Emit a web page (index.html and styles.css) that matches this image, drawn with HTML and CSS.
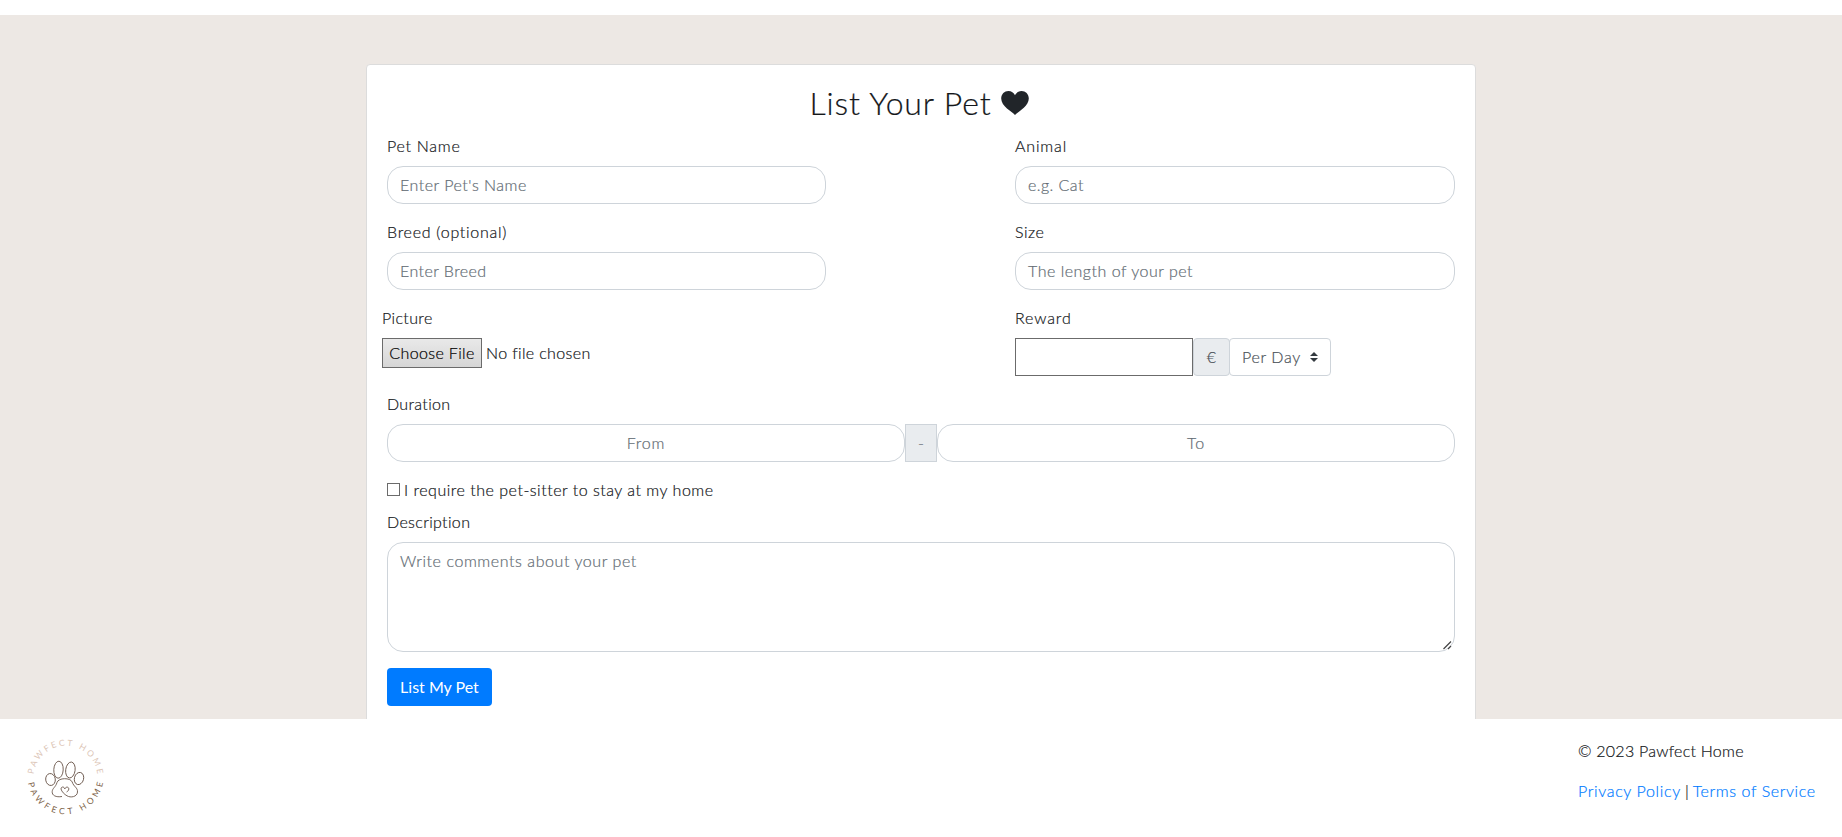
FILE: index.html
```html
<!DOCTYPE html>
<html lang="en">
<head>
<meta charset="utf-8">
<title>Pawfect Home</title>
<link rel="stylesheet" href="styles.css">
</head>
<body>
<main class="page">
  <form class="card">
    <h2 class="title"><span>List Your Pet</span>
      <svg class="heart" viewBox="0 0 28 24"><path d="M14 24 C11 20.500 0.200 15.500 0.200 7.500 C0.200 3 3.500 0 7.400 0 C10.500 0 12.800 1.600 14 4.300 C15.200 1.600 17.500 0 20.600 0 C24.500 0 27.800 3 27.800 7.500 C27.800 15.500 17 20.500 14 24Z"/></svg>
    </h2>
    <div class="row">
      <div class="group left"><label class="t-petname">Pet Name</label><div class="control"><span class="t-enter">Enter Pet's Name</span></div></div>
      <div class="group"><label class="t-animal">Animal</label><div class="control"><span class="t-cat">e.g. Cat</span></div></div>
    </div>
    <div class="row">
      <div class="group left"><label class="t-breed">Breed (optional)</label><div class="control"><span class="t-enterbreed">Enter Breed</span></div></div>
      <div class="group"><label class="t-size">Size</label><div class="control"><span class="t-length">The length of your pet</span></div></div>
    </div>
    <div class="row">
      <div class="group picture"><label class="t-picture">Picture</label>
        <div class="file"><span class="choose t-choose">Choose File</span><span class="t-nofile">No file chosen</span></div></div>
      <div class="group"><label class="t-reward">Reward</label>
        <div class="reward"><div class="amount"></div><div class="euro">€</div>
          <div class="select"><span class="t-perday">Per Day</span><svg class="caret" viewBox="0 0 8 10"><path d="M4 0 8 4H0zM4 10 0 6H8z"/></svg></div></div></div>
    </div>
    <div class="group wide"><label class="t-duration">Duration</label>
      <div class="duration"><div class="control centered"><span class="t-from">From</span></div><div class="dash">-</div><div class="control centered"><span class="t-to">To</span></div></div></div>
    <div class="check"><span class="box"></span><span class="t-require">I require the pet-sitter to stay at my home</span></div>
    <div class="group wide"><label class="t-description">Description</label>
      <div class="control area"><span class="t-write">Write comments about your pet</span>
        <svg class="grip" viewBox="0 0 9 9"><path d="M.5 8 8 .5M5 8 8 5"/></svg></div></div>
    <div class="submit"><span class="t-submit">List My Pet</span></div>
  </form>
</main>
<footer class="footer">
  <svg class="logo" viewBox="0 0 90 90">
    <defs>
      <path id="arc-top" d="M13.700 41.200 A32 32 0 0 1 77.300 41.200"/>
      <path id="arc-bottom" d="M8.100 50 A38 38 0 0 0 82.900 50"/>
    </defs>
    <text class="mark mark-top"><textPath href="#arc-top" textLength="93">PAWFECT HOME</textPath></text>
    <text class="mark mark-bottom"><textPath href="#arc-bottom" textLength="106">PAWFECT HOME</textPath></text>
    <g class="paw">
      <ellipse cx="38.500" cy="36.700" rx="4.700" ry="8.500" transform="rotate(3 38.500 36.700)"/>
      <ellipse cx="50.400" cy="37" rx="4.700" ry="8" transform="rotate(8 50.400 37)"/>
      <ellipse cx="30.500" cy="46.500" rx="4.800" ry="6" transform="rotate(-8 30.500 46.500)"/>
      <ellipse cx="59" cy="45.500" rx="4.600" ry="6.200" transform="rotate(15 59 45.500)"/>
      <path d="M42 63.500 C36 64.500 31.800 62.500 32.200 58.500 C32.500 55 35.500 54.500 37 49.500 C38.500 44.500 50.500 44.500 52.200 49 C53.800 54 57.800 54.500 57.500 59 C57.200 64 50.500 65 47 62.800 C44.500 61.500 41.500 58.500 41 56 C41.200 53.200 44.300 53.500 44.800 56 C45.500 53.500 48.800 53.500 48.800 56 C48.800 57.500 47.500 58.500 46.600 59"/>
    </g>
  </svg>
  <div class="legal">
    <p class="t-copy">© 2023 Pawfect Home</p>
    <p><a class="t-privacy">Privacy Policy</a><span class="bar">|</span><a class="t-terms">Terms of Service</a></p>
  </div>
</footer>
</body>
</html>
```
FILE: styles.css
```css
* { box-sizing: border-box; }
body { margin: 0; height: 837px; overflow: hidden; background: #fff; color: #14171a; font: 300 16px/24px Lato, "Open Sans", sans-serif; white-space: nowrap; font-variant-ligatures: none; -webkit-text-stroke: .2px; }
.page { margin-top: 15px; height: 704px; padding-top: 49px; background: #ede8e4; overflow: hidden; }
.card { width: 1110px; height: 700px; margin: 0 auto; padding: 20px; background: #fff; border: 1px solid #dcdcdc; border-radius: 4px; }
.title { display: flex; justify-content: center; align-items: flex-start; gap: 10px; height: 38px; margin: 0 0 11px; padding-right: 3px; font-size: 32px; font-weight: 300; line-height: 36px; }
.title span { letter-spacing: .85px; }
.heart { width: 28px; height: 24px; margin-top: 6px; fill: #212529; }
.row { display: flex; justify-content: space-between; }
.group { width: 440px; height: 86px; }
.left { width: 439px; }
.group label { display: block; margin-bottom: 8px; }
.control { display: flex; height: 38px; padding: 6px 12px; color: #636c74; background: #fff; border: 1px solid #ced4da; border-radius: 16px; }
.centered { flex: 1; justify-content: center; }
.picture { margin-left: -5px; }
.file { display: flex; align-items: center; gap: 4px; height: 30px; }
.choose { width: 100px; height: 30px; border: 1px solid #6b6b6b; background: linear-gradient(#e9e9e9, #d6d6d6); text-align: center; line-height: 28px; color: #000; }
.reward { display: flex; height: 38px; }
.amount { width: 178px; border: 1px solid #6b6b6b; }
.euro, .dash { background: #e9ecef; border: 1px solid #ced4da; color: #495057; text-align: center; line-height: 36px; }
.euro { width: 37px; border-radius: 4px; }
.dash { width: 32px; color: #7c838c; }
.select { display: flex; align-items: center; justify-content: space-between; width: 102px; margin-left: -1px; padding: 0 12px; color: #495057; border: 1px solid #ced4da; border-radius: 4px; }
.caret { width: 8px; height: 10px; fill: #343a40; }
.wide { width: auto; }
.duration { display: flex; }
.check { display: flex; align-items: center; gap: 4px; height: 24px; margin-bottom: 8px; }
.box { width: 13px; height: 13px; border: 1px solid #6b6b6b; margin-top: -2px; }
.area { position: relative; height: 110px; }
.grip { position: absolute; right: 2px; bottom: 1px; width: 9px; height: 9px; fill: none; stroke: #444; stroke-width: 1.2; }
.wide:has(.area) { height: 158px; }
.submit { width: 105px; height: 38px; border-radius: 4px; background: #007bff; color: #fff; font-weight: 400; text-align: center; line-height: 38px; -webkit-text-stroke: 0; }
.footer { display: flex; justify-content: space-between; height: 118px; padding: 14px 26px 0 20px; }
.logo { width: 90px; height: 90px; }
.mark { font: 400 8.5px Lato, sans-serif; }
.mark-top { fill: #dcc5b6; }
.mark-bottom { fill: #7c6248; }
.paw { fill: none; stroke: #6b574c; stroke-width: .9; }
.legal { width: 238px; padding-top: 6px; }
.legal p { display: flex; margin: 0 0 16px; }
.legal a { color: #007bff; }
.bar { margin: 0 4px; }

/* Tracking per label */
.t-petname, .t-breed { letter-spacing: .73px; }
.t-animal, .t-reward { letter-spacing: .85px; }
.t-enter, .t-length, .t-require, .t-size { letter-spacing: .51px; }
.t-cat, .t-enterbreed { letter-spacing: .44px; }
.t-write { letter-spacing: .57px; }
.t-picture, .t-choose, .t-nofile { letter-spacing: .36px; }
.t-perday, .t-privacy { letter-spacing: .65px; }
.t-terms { letter-spacing: .6px; }
.t-duration, .t-description { letter-spacing: .35px; }
.t-copy { letter-spacing: .25px; }
.t-from, .t-to { letter-spacing: .8px; }
```
